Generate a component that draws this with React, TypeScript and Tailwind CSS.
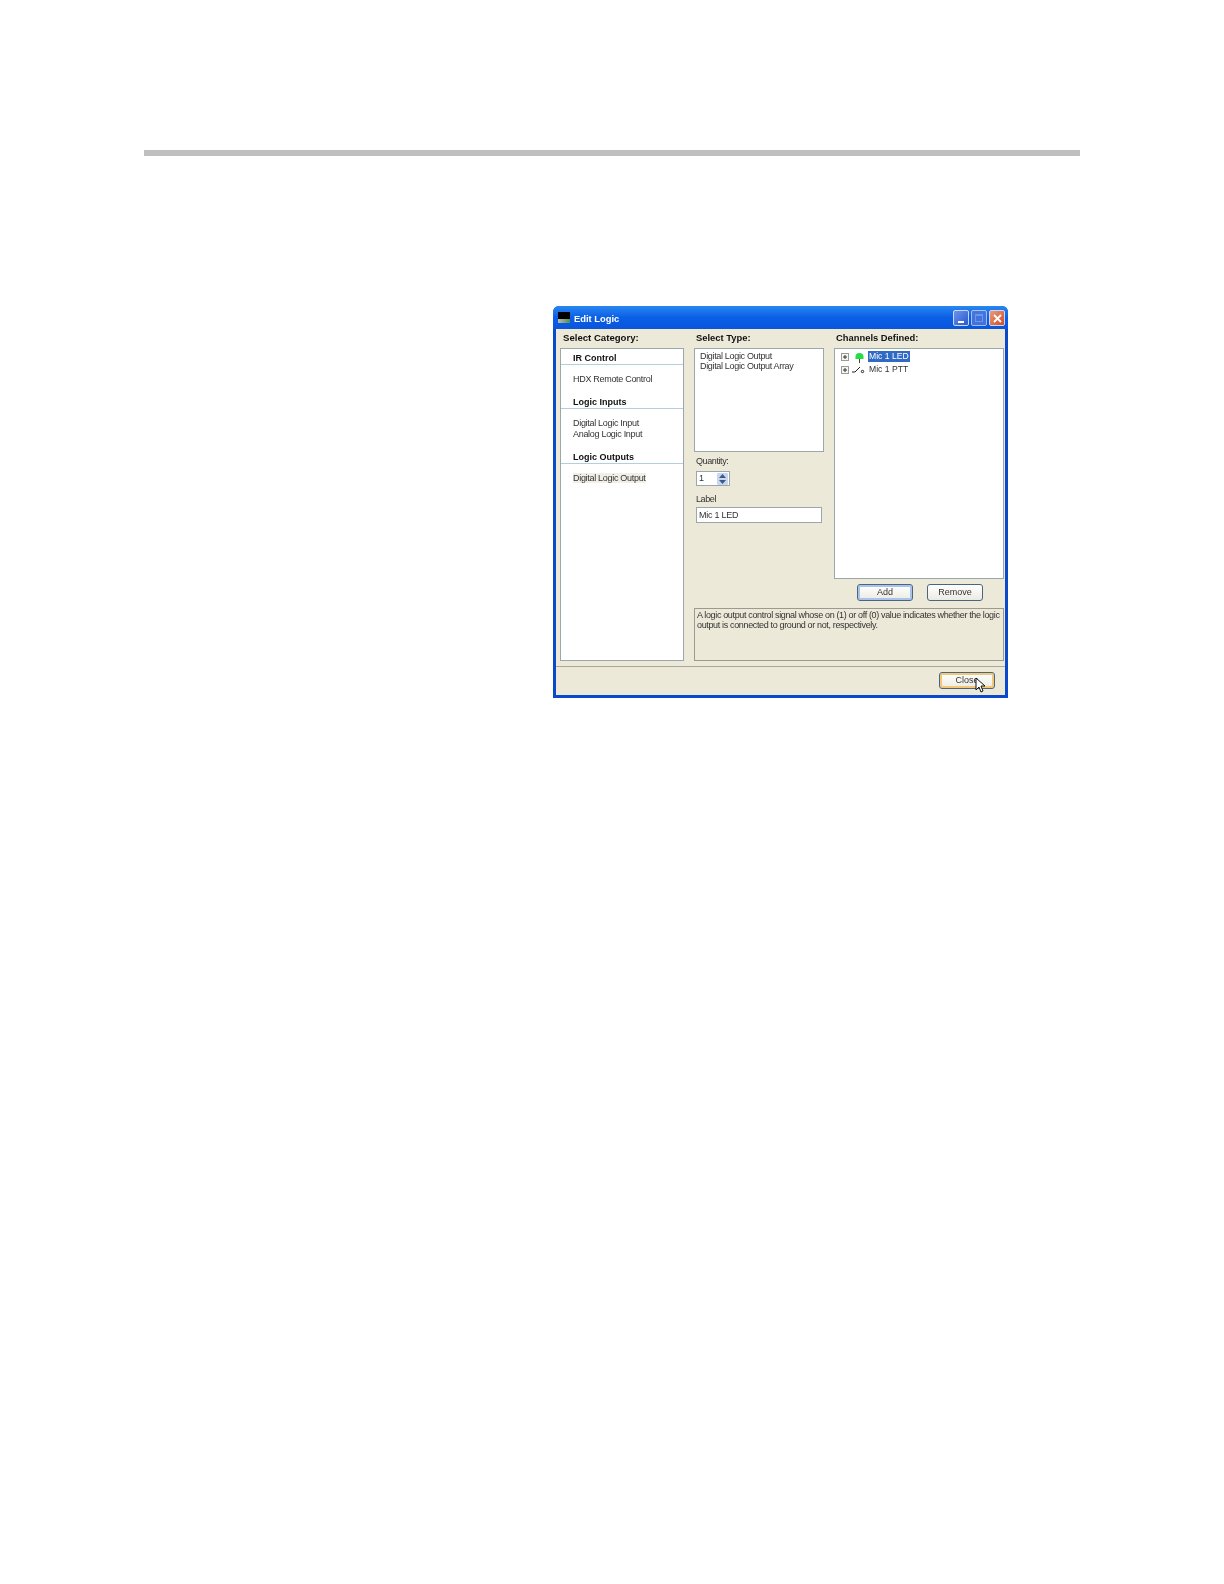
const headerClass = "h-[15px] border-b border-[#b4cfdc] pl-[12px] text-[9px] leading-[16px] font-bold text-[#111]";
const itemsClass = "py-[9px] pl-[12px] text-[9px] leading-[11px] tracking-[-0.3px] text-[#333]";
const labelClass = "h-[19px] pl-[2px] text-[9.4px] leading-[18px] font-bold text-[#111]";
const smallLabelClass = "pl-[2px] text-[9px] leading-[11px] tracking-[-0.4px] text-[#333]";
const buttonClass = "flex h-[17px] w-[56px] items-center justify-center rounded-[3px] border border-[#4a6482] bg-gradient-to-b from-white to-[#ecebe2] text-[9px] text-[#333]";

function PlusBox() {
  return (
    <svg width="8" height="8" viewBox="0 0 8 8" className="shrink-0">
      <rect x="0.5" y="0.5" width="7" height="7" fill="#f4f4f0" stroke="#9a9a9a" />
      <path d="M2 4h4M4 2v4" stroke="#333" />
    </svg>
  );
}

function WinButton({ children, className }: { children?: React.ReactNode; className: string }) {
  return (
    <div className={`flex h-[16px] w-[16px] items-center justify-center rounded-[2px] border border-[#c9d6f4] ${className}`}>
      {children}
    </div>
  );
}

export default function App() {
  return (
    <div className="min-h-[1584px] bg-white pt-[150px] font-['Liberation_Sans',Arial,sans-serif]">
      <div className="ml-[144px] h-[6px] w-[936px] bg-[#bfbfbf]" />

      <div className="relative mt-[150px] ml-[553px] flex h-[392px] w-[455px] flex-col rounded-t-[6px] bg-[#0a48cc] blur-[0.35px]">
        {/* Title bar */}
        <div className="flex h-[23px] items-center rounded-t-[6px] bg-gradient-to-b from-[#2a86f0] via-[#0a5fe6] to-[#0a55dc] pr-[3px] pl-[5px]">
          <div className="flex h-[11px] w-[12px] flex-col">
            <div className="h-[7px] bg-black" />
            <div className="h-[4px] bg-gradient-to-r from-[#b8b8b8] to-[#4c8f5c]" />
          </div>
          <span className="ml-[4px] pt-[3px] text-[9.4px] font-bold text-white">Edit Logic</span>
          <div className="ml-auto flex gap-[2px] pt-[1px]">
            <WinButton className="items-end bg-gradient-to-br from-[#6d93ea] to-[#2a57d0] pb-[2px]">
              <div className="h-[2px] w-[6px] bg-white" />
            </WinButton>
            <WinButton className="bg-[#4f78dc] opacity-80">
              <div className="h-[8px] w-[8px] border border-t-2 border-[#86a2e6]" />
            </WinButton>
            <WinButton className="bg-gradient-to-br from-[#ea9a7a] to-[#cf4a22]">
              <svg width="9" height="9" viewBox="0 0 9 9">
                <path d="M1 1l7 7M8 1l-7 7" stroke="white" strokeWidth="1.8" />
              </svg>
            </WinButton>
          </div>
        </div>

        {/* Body */}
        <div className="mx-[3px] mb-[3px] flex flex-1 flex-col bg-[#ece9d8]">
          <div className="flex gap-[10px] pl-[4px]">
            {/* Category column */}
            <div className="w-[124px]">
              <div className={`${labelClass} pl-[3px] text-[9.6px]`}>Select Category:</div>
              <div className="h-[313px] border border-[#9aa7ad] bg-white pt-[1px]">
                <div className={headerClass}>IR Control</div>
                <div className={itemsClass}>HDX Remote Control</div>
                <div className={headerClass}>Logic Inputs</div>
                <div className={itemsClass}>
                  Digital Logic Input
                  <br />
                  Analog Logic Input
                </div>
                <div className={headerClass}>Logic Outputs</div>
                <div className={itemsClass}>
                  <span className="bg-[#f1efe6]">Digital Logic Output</span>
                </div>
              </div>
            </div>

            <div className="flex flex-col">
              <div className="flex gap-[10px]">
                {/* Type column */}
                <div className="w-[130px]">
                  <div className={labelClass}>Select Type:</div>
                  <div className="h-[104px] border border-[#9aa7ad] bg-white pt-[2px] pl-[5px] text-[9px] leading-[10px] tracking-[-0.33px] text-[#333]">
                    Digital Logic Output
                    <br />
                    Digital Logic Output Array
                  </div>
                  <div className={`${smallLabelClass} mt-[4px]`}>Quantity:</div>
                  <div className="mt-[4px] ml-[2px] flex h-[15px] w-[34px] items-center justify-between border border-[#9aa7ad] bg-white pr-[1px] pl-[2px] text-[9px] text-[#333]">
                    <span>1</span>
                    <div className="flex h-[12px] w-[11px] flex-col items-center justify-around rounded-[1px] bg-[#c9d6ee]">
                      <svg width="7" height="4" viewBox="0 0 7 4">
                        <path d="M3.5 0L7 4H0z" fill="#3a5a8c" />
                      </svg>
                      <svg width="7" height="4" viewBox="0 0 7 4">
                        <path d="M0 0h7L3.5 4z" fill="#3a5a8c" />
                      </svg>
                    </div>
                  </div>
                  <div className={`${smallLabelClass} mt-[8px]`}>Label</div>
                  <div className="mt-[2px] ml-[2px] h-[16px] w-[126px] border border-[#9aa7ad] bg-white pl-[2px] text-[9px] leading-[14px] tracking-[-0.25px] text-[#333]">
                    Mic 1 LED
                  </div>
                </div>

                {/* Channels column */}
                <div className="w-[170px]">
                  <div className={labelClass}>Channels Defined:</div>
                  <div className="h-[231px] border border-[#9aa7ad] bg-white pt-[2px] pl-[6px]">
                    <div className="flex h-[11px] items-center">
                      <PlusBox />
                      <svg width="13" height="12" viewBox="0 0 13 12" className="ml-[4px] shrink-0">
                        <path d="M2.5 6a4 4 0 0 1 8 0v2h-8z" fill="#22dd44" />
                        <path d="M6.5 8v4" stroke="#444" />
                      </svg>
                      <span className="ml-[2px] h-[11px] bg-[#316ac5] px-[1px] text-[8.6px] leading-[11px] text-white">Mic 1 LED</span>
                    </div>
                    <div className="mt-[2px] flex h-[11px] items-center">
                      <PlusBox />
                      <svg width="13" height="8" viewBox="0 0 13 8" className="ml-[3px] shrink-0">
                        <path d="M0 6h3l5-5" stroke="#222" fill="none" />
                        <circle cx="10.5" cy="5.5" r="1.2" fill="none" stroke="#222" />
                      </svg>
                      <span className="ml-[4px] text-[8.6px] leading-[11px] text-[#333]">Mic 1 PTT</span>
                    </div>
                  </div>
                  <div className="mt-[5px] flex gap-[14px] pl-[23px]">
                    <div className={`${buttonClass} shadow-[inset_0_0_0_2px_#a9c4ec]`}>Add</div>
                    <div className={buttonClass}>Remove</div>
                  </div>
                </div>
              </div>
              <div className="mt-[7px] h-[53px] w-[310px] border border-[#9a9a90] pt-[1px] pl-[2px] text-[9px] leading-[10px] tracking-[-0.35px] whitespace-nowrap text-[#333]">
                A logic output control signal whose on (1) or off (0) value indicates whether the logic
                <br />
                output is connected to ground or not, respectively.
              </div>
            </div>
          </div>

          {/* Footer */}
          <div className="mt-[5px] flex flex-1 justify-end border-t border-[#aca899] pt-[5px] pr-[10px]">
            <div className={`${buttonClass} shadow-[inset_0_0_0_2px_#f0c878]`}>Close</div>
          </div>
        </div>

        {/* Mouse pointer over the Close button */}
        <svg width="11" height="17" viewBox="0 0 11 17" className="absolute top-[371px] left-[422px]">
          <path d="M1 1v12l3-3 2 5 2-1-2-5h4z" fill="white" stroke="#111" />
        </svg>
      </div>
    </div>
  );
}
